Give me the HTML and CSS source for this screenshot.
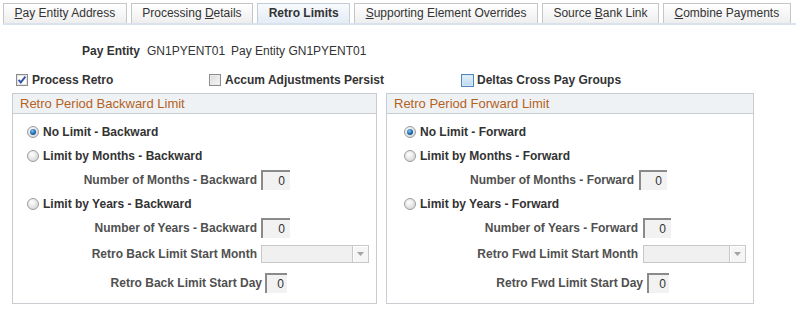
FILE: index.html
```html
<!DOCTYPE html>
<html>
<head>
<meta charset="utf-8">
<title>Retro Limits</title>
<link rel="stylesheet" href="styles.css">
</head>
<body>
<nav class="tabbar">
  <div class="tab"><u>P</u>ay Entity Address</div>
  <div class="tab">Processing <u>D</u>etails</div>
  <div class="tab tab-active">Retro Limits</div>
  <div class="tab"><u>S</u>upporting Element Overrides</div>
  <div class="tab">Source <u>B</u>ank Link</div>
  <div class="tab"><u>C</u>ombine Payments</div>
</nav>

<div class="entity">
  <span class="entity-label">Pay Entity</span>
  <span class="entity-val">GN1PYENT01</span>
  <span class="entity-desc">Pay Entity GN1PYENT01</span>
</div>

<div class="checks">
  <div class="check">
    <svg class="cb" width="12" height="12" viewBox="0 0 12 12"><rect x="0.5" y="0.5" width="11" height="11" fill="#fdfdfd" stroke="#8c8c8c"/><rect x="1.5" y="1.5" width="9" height="9" fill="none" stroke="#e4e4e4"/><path d="M2.6 5.8 L4.8 8.4 L9.4 2.6" fill="none" stroke="#3552a6" stroke-width="1.9"/></svg>
    <span>Process Retro</span>
  </div>
  <div class="check">
    <span class="cb cb-off"></span>
    <span>Accum Adjustments Persist</span>
  </div>
  <div class="check check-focus">
    <span class="cb cb-focus"></span>
    <span>Deltas Cross Pay Groups</span>
  </div>
</div>

<div class="groups">
  <section class="gbox gbox-back">
    <div class="ghead">Retro Period Backward Limit</div>
    <div class="gbody">
      <div class="rrow"><span class="radio radio-on"></span>No Limit - Backward</div>
      <div class="rrow"><span class="radio"></span>Limit by Months - Backward</div>
      <div class="frow f-months"><span class="flabel">Number of Months - Backward</span><span class="num">0</span></div>
      <div class="rrow"><span class="radio"></span>Limit by Years - Backward</div>
      <div class="frow f-years"><span class="flabel">Number of Years - Backward</span><span class="num">0</span></div>
      <div class="frow f-sel"><span class="flabel">Retro Back Limit Start Month</span><span class="sel"><span class="sel-btn"><svg width="7" height="4" viewBox="0 0 7 4"><path d="M0 0 H7 L3.5 4 Z" fill="#a3a3a3"/></svg></span></span></div>
      <div class="frow f-day"><span class="flabel">Retro Back Limit Start Day</span><span class="num num-day">0</span></div>
    </div>
  </section>

  <section class="gbox gbox-fwd">
    <div class="ghead">Retro Period Forward Limit</div>
    <div class="gbody">
      <div class="rrow"><span class="radio radio-on"></span>No Limit - Forward</div>
      <div class="rrow"><span class="radio"></span>Limit by Months - Forward</div>
      <div class="frow f-months"><span class="flabel">Number of Months - Forward</span><span class="num">0</span></div>
      <div class="rrow"><span class="radio"></span>Limit by Years - Forward</div>
      <div class="frow f-years"><span class="flabel">Number of Years - Forward</span><span class="num">0</span></div>
      <div class="frow f-sel"><span class="flabel">Retro Fwd Limit Start Month</span><span class="sel"><span class="sel-btn"><svg width="7" height="4" viewBox="0 0 7 4"><path d="M0 0 H7 L3.5 4 Z" fill="#a3a3a3"/></svg></span></span></div>
      <div class="frow f-day"><span class="flabel">Retro Fwd Limit Start Day</span><span class="num num-day">0</span></div>
    </div>
  </section>
</div>
</body>
</html>
```

FILE: styles.css
```css
body {
  margin: 0;
  background: #fff;
  font-family: "Liberation Sans", Arial, sans-serif;
  font-size: 12px;
  color: #333;
}

/* Tabs */
.tabbar {
  display: flex;
  gap: 4px;
  margin: 3px 0 0 3px;
  border-bottom: 2px solid #dae3ed;
}
.tab {
  box-sizing: border-box;
  height: 20px;
  padding: 0 10.5px;
  border: 1px solid #c6c6c6;
  border-bottom: 0;
  line-height: 19px;
  white-space: nowrap;
  color: #333;
  background: linear-gradient(#ffffff, #eeeeee);
}
.tab-active {
  font-weight: bold;
  border-color: #c3ccd6;
  background: linear-gradient(#f8fafd, #e4ecf5);
}

/* Pay entity line */
.entity {
  display: flex;
  margin-top: 19px;
  padding-left: 82px;
  line-height: 14px;
}
.entity-label {
  font-weight: bold;
  margin-right: 7px;
}
.entity-val {
  margin-right: 6px;
}

/* Checkboxes */
.checks {
  display: grid;
  grid-template-columns: 193px 252px auto;
  margin-top: 15px;
  padding-left: 16px;
  line-height: 14px;
  font-weight: bold;
}
.check {
  display: flex;
  align-items: center;
  gap: 4px;
}
.cb {
  flex: none;
  display: block;
  box-sizing: border-box;
  width: 12px;
  height: 12px;
}
.cb-off {
  border: 1px solid #8c8c8c;
  background: linear-gradient(135deg, #d9d9d9, #f7f7f7);
  box-shadow: inset 0 0 0 1px #ececec;
}
.cb-focus {
  width: 13px;
  height: 13px;
  border: 1px solid #4f86bb;
  background: linear-gradient(#e3f1fb, #b9d8ef);
  box-shadow: inset 0 0 0 1px #d6e8f6;
}
.check-focus {
  gap: 3px;
}

/* Group boxes */
.groups {
  display: flex;
  gap: 9px;
  margin: 6px 0 0 12px;
}
.gbox {
  box-sizing: border-box;
  border: 1px solid #c9cdd1;
}
.gbox-back {
  width: 365px;
}
.gbox-fwd {
  width: 368px;
}
.ghead {
  height: 19px;
  line-height: 19px;
  padding-left: 7px;
  background: #eef2f4;
  border-bottom: 1px solid #c9cdd1;
  font-size: 13px;
  color: #b5611f;
}
.gbody {
  display: flex;
  flex-direction: column;
  gap: 4px;
  padding: 8px 0 10px;
}

/* Radio rows */
.rrow {
  display: flex;
  align-items: center;
  height: 20px;
  font-weight: bold;
  color: #333;
}
.gbox-back .rrow {
  padding-left: 14px;
}
.gbox-fwd .rrow {
  padding-left: 17px;
}
.radio {
  flex: none;
  box-sizing: border-box;
  width: 12px;
  height: 12px;
  margin-right: 4px;
  border-radius: 50%;
  border: 1px solid #9c9c9c;
  background: radial-gradient(circle at 40% 35%, #ffffff, #cdcdcd);
}
.radio-on::after {
  content: "";
  display: block;
  width: 6px;
  height: 6px;
  margin: 2px;
  border-radius: 50%;
  background: radial-gradient(circle at 40% 35%, #8cc2ec, #1767ad 55%, #0c4a86);
}

/* Field rows */
.frow {
  display: flex;
  align-items: center;
  height: 20px;
  font-weight: bold;
  color: #505050;
}
.flabel {
  flex: none;
  text-align: right;
  white-space: nowrap;
}
.f-sel {
  margin-top: 2px;
}
.f-day {
  margin-top: 5px;
}

.gbox-back .f-months .flabel,
.gbox-back .f-years .flabel,
.gbox-back .f-sel .flabel {
  width: 244px;
  margin-right: 4px;
}
.gbox-back .f-day .flabel {
  width: 249px;
  margin-right: 3px;
}
.gbox-fwd .f-months .flabel {
  width: 247px;
  margin-right: 5px;
}
.gbox-fwd .f-years .flabel,
.gbox-fwd .f-sel .flabel {
  width: 251px;
  margin-right: 5px;
}
.gbox-fwd .f-day .flabel {
  width: 256px;
  margin-right: 4px;
}

.num {
  box-sizing: border-box;
  width: 29px;
  height: 20px;
  padding-right: 5px;
  border-top: 2px solid #8a8a8a;
  border-left: 2px solid #8a8a8a;
  background: #f2f2f2;
  line-height: 18px;
  text-align: right;
  font-weight: normal;
  color: #333;
}
.gbox-fwd .num {
  width: 28px;
}
.num-day,
.gbox-fwd .num-day {
  width: 22px;
  padding-right: 3px;
}

.sel {
  box-sizing: border-box;
  display: flex;
  justify-content: flex-end;
  width: 108px;
  height: 18px;
  border: 1px solid #c8c8c8;
  background: #f0f0f0;
}
.gbox-fwd .sel {
  width: 103px;
}
.sel-btn {
  display: flex;
  align-items: center;
  justify-content: center;
  width: 15px;
  border-left: 1px solid #c8c8c8;
  background: #f5f5f5;
  box-shadow: inset 1px 1px 0 #fff;
}
```
